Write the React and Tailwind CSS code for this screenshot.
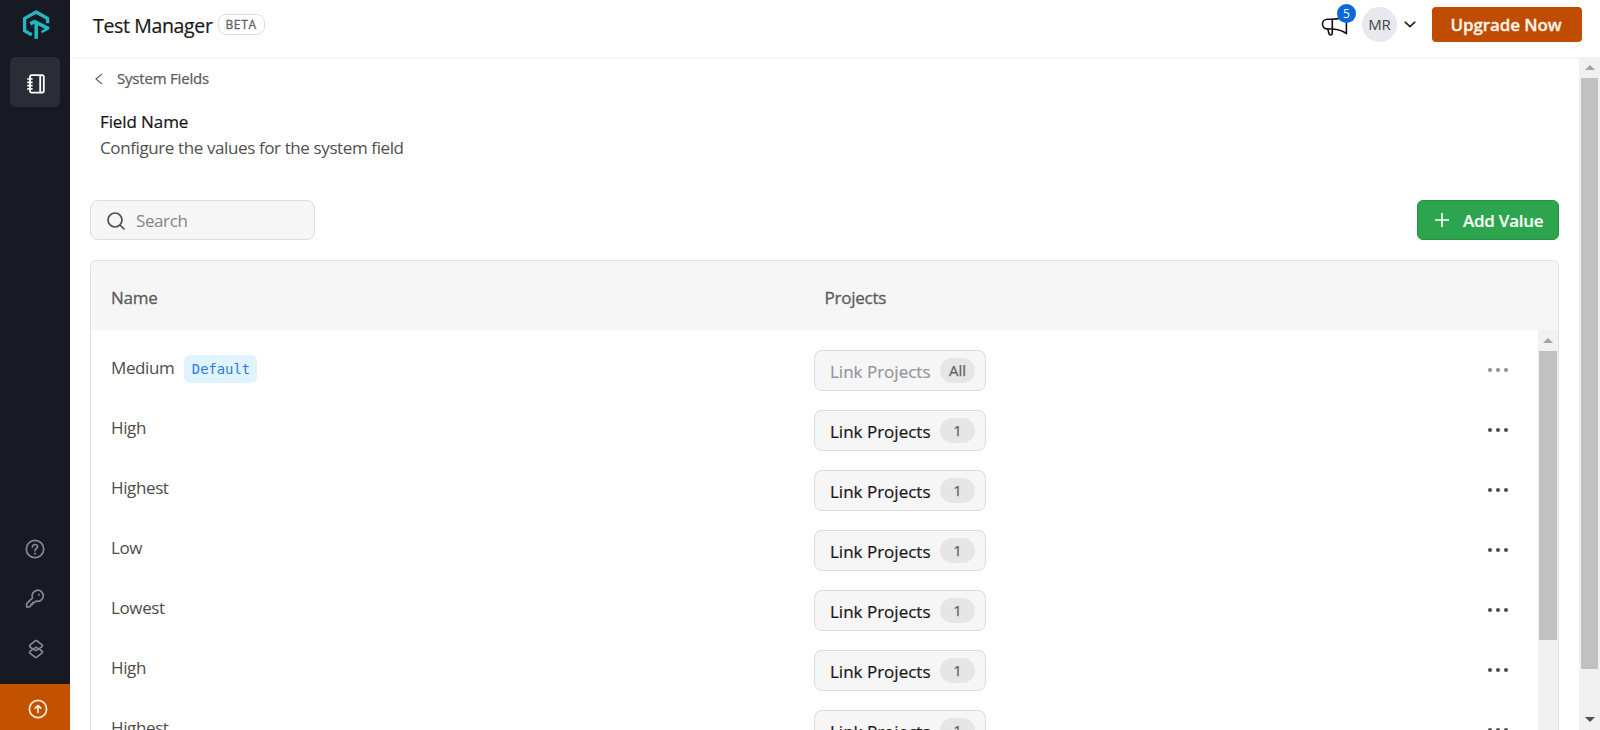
import React from "react";

const values = [
  { name: "Medium", isDefault: true, linked: "All" },
  { name: "High", linked: "1" },
  { name: "Highest", linked: "1" },
  { name: "Low", linked: "1" },
  { name: "Lowest", linked: "1" },
  { name: "High", linked: "1" },
  { name: "Highest", linked: "1" },
];

function Logo() {
  return (
    <svg className="ml-px h-[30px] w-[28px]" viewBox="0 0 28 30" fill="none" stroke="#22b8c2" strokeWidth="3.3" strokeLinejoin="round">
      <path d="M9.8 24.8 L2.6 20.9 V8.4 L14.2 2 L25.6 8.5 V13.2" />
      <path d="M8.2 13.9 L12.6 11.6 L27 18.8" strokeWidth="3.6" />
      <path d="M25.6 18.6 L19.4 22.2" strokeWidth="2.4" />
      <path d="M14.2 12 V28.8" strokeWidth="3.6" />
    </svg>
  );
}

function Notebook() {
  return (
    <svg className="h-5 w-5" viewBox="0 0 20 20" fill="none" stroke="#fff" strokeWidth="1.8">
      <rect x="4" y="1.2" width="13.8" height="17.4" rx="1.8" />
      <path d="M14.2 1.4 V18.4" />
      <path d="M1.2 5 H6.6 M1.2 8.3 H6.6 M1.2 11.6 H6.6 M1.2 14.9 H6.6" strokeWidth="1.7" />
    </svg>
  );
}

function Help() {
  return (
    <svg className="h-5 w-5" viewBox="0 0 20 20" fill="none" stroke="#858a92" strokeWidth="1.7" strokeLinecap="round">
      <circle cx="10" cy="10" r="8.7" />
      <path d="M7.5 8 C7.5 4.6 12.6 4.8 12.5 7.9 C12.4 9.8 10 9.8 10 11.8" />
      <circle cx="10" cy="14.6" r="0.7" fill="#858a92" strokeWidth="0.9" />
    </svg>
  );
}

function Key() {
  return (
    <svg className="h-5 w-5" viewBox="0 0 20 20" fill="none" stroke="#858a92" strokeWidth="1.7" strokeLinejoin="round">
      <path d="M7.5 8.9 A5.6 5.6 0 1 1 10.8 12.1 L9.2 13.7 H7.6 V15.3 H5.9 V16.7 L4.5 17.9 H1.7 V14.7 Z" />
      <circle cx="13.8" cy="5.8" r="1" fill="#858a92" stroke="none" />
    </svg>
  );
}

function Links() {
  return (
    <svg className="ml-[2px] h-5 w-5" viewBox="0 0 20 20" fill="none" stroke="#858a92" strokeWidth="1.7" strokeLinejoin="round" strokeLinecap="round">
      <path d="M7.4 10 L9.4 11.4 Q10 11.8 10.6 11.4 L15.8 7.9 Q17 6.8 15.8 5.6 L10.8 1.8 Q10 1.2 9.2 1.8 L4.2 5.8 Q3 7 4.2 8 L5.8 9.2" />
      <path d="M12.6 10 L10.6 8.6 Q10 8.2 9.4 8.6 L4.2 12.1 Q3 13.2 4.2 14.4 L9.2 18.2 Q10 18.8 10.8 18.2 L15.8 14.2 Q17 13 15.8 12 L14.2 10.8" />
    </svg>
  );
}

function UpCircle() {
  return (
    <svg className="h-5 w-5" viewBox="0 0 20 20" fill="none" stroke="#ffeedd" strokeWidth="1.7" strokeLinecap="round" strokeLinejoin="round">
      <circle cx="10" cy="10" r="8.6" />
      <path d="M10 13.4 V6.8 M7.2 9.2 L10 6.5 L12.8 9.2" />
    </svg>
  );
}

function Megaphone() {
  return (
    <svg className="h-[22px] w-7" viewBox="0 0 28 22" fill="none" stroke="#111" strokeWidth="1.6" strokeLinejoin="round" strokeLinecap="round">
      <path d="M11.5 4.2 H6.4 A4.9 4.9 0 0 0 6.4 14 H11.5 Q20 14.4 25.4 18.6 V1 Q20 4 11.5 4.2 Z" />
      <path d="M11.3 4.2 V18 Q11.2 20 9.6 20 Q8.2 20 7.8 18 L6.8 14" />
    </svg>
  );
}

function Scrollbar({ className, thumb, down }) {
  return (
    <div className={"flex shrink-0 flex-col items-center bg-[#f1f1f1] " + className}>
      <div className="flex h-[21px] w-full shrink-0 items-center justify-center">
        <svg className="h-[5px] w-[10px]" viewBox="0 0 10 5"><path d="M0 5 L5 0 L10 5 Z" fill="#a3a3a3" /></svg>
      </div>
      <div className={"shrink-0 bg-[#c1c1c1] " + thumb} />
      {down && (
        <div className="mt-auto flex h-[21px] w-full shrink-0 items-center justify-center">
          <svg className="h-[5px] w-[10px]" viewBox="0 0 10 5"><path d="M0 0 L5 5 L10 0 Z" fill="#505050" /></svg>
        </div>
      )}
    </div>
  );
}

function Row({ name, isDefault, linked }) {
  return (
    <div className="flex h-[60px] shrink-0 items-start">
      <div className="flex w-[703px] shrink-0 items-start">
        <span className="pt-[6px] text-[17px] leading-6 tracking-[-0.38px] text-[#4d4d4d]">{name}</span>
        {isDefault && (
          <span className="mt-[5px] ml-[10px] flex h-7 w-[73px] items-center justify-center rounded-md bg-[#dff4ff] font-['DejaVu_Sans_Mono','Liberation_Mono',monospace] text-[13.8px] text-[#2f7bdc]">
            Default
          </span>
        )}
      </div>
      <button className="flex h-[41px] w-[172px] shrink-0 items-center rounded-lg border border-[#dadcdf] bg-[#f6f6f6] pl-[15px]">
        <span className={"w-[110px] shrink-0 pt-[2px] text-left text-[17px] leading-6 [-webkit-text-stroke:0.2px_currentColor] " + (isDefault ? "text-[#90969e]" : "text-[#161616]")}>
          Link Projects
        </span>
        <span className="mb-px flex h-[25px] w-[35px] items-center justify-center rounded-full bg-[#e6e6e6] text-[15px] text-[#606060] [-webkit-text-stroke:0.25px_currentColor]">
          {linked}
        </span>
      </button>
      <div className={"mt-[18px] ml-auto flex w-5 items-center justify-between " + (isDefault ? "text-[#919191]" : "text-[#4c4c4c]")}>
        <i className="size-[3.6px] rounded-full bg-current" />
        <i className="size-[3.6px] rounded-full bg-current" />
        <i className="size-[3.6px] rounded-full bg-current" />
      </div>
    </div>
  );
}

export default function App() {
  return (
    <div className="flex h-[730px] w-[1600px] overflow-hidden bg-white font-['Open_Sans','Noto_Sans',sans-serif]">
      <aside className="flex w-[70px] shrink-0 flex-col items-center bg-[#171a22]">
        <div className="flex h-[57px] items-start pt-[10px]"><Logo /></div>
        <div className="flex size-[50px] shrink-0 items-center justify-center rounded-md bg-[#292e36] pt-[3px] pl-[2px]"><Notebook /></div>
        <div className="mt-auto flex flex-col items-center gap-[30px] pb-[25px]">
          <Help />
          <Key />
          <Links />
        </div>
        <div className="flex h-[46px] w-full shrink-0 items-center justify-center bg-[#c25100] pt-1 pl-[5px]"><UpCircle /></div>
      </aside>

      <div className="flex min-w-0 flex-1 flex-col">
        <header className="flex h-[57px] shrink-0 items-start pr-[18px] pl-[23px]">
          <h1 className="pt-[11px] text-[19.5px] leading-[30px] tracking-[-0.34px] text-[#191919] [-webkit-text-stroke:0.2px_currentColor]">Test Manager</h1>
          <span className="mt-[14px] ml-[5px] flex h-[21px] w-[47px] items-center justify-center rounded-[8px] border border-[#dedede] text-[12px] tracking-[0.7px] text-[#606060] [-webkit-text-stroke:0.3px_currentColor]">BETA</span>
          <div className="relative mt-[15px] ml-auto">
            <Megaphone />
            <span className="absolute -top-[11px] left-[16px] flex size-[19px] items-center justify-center rounded-full bg-[#0969da] pt-px text-[12px] text-white">5</span>
          </div>
          <div className="mt-[7px] ml-[13px] flex size-[35px] items-center justify-center rounded-full bg-[#e8e8ef] text-[15px] text-[#444]">MR</div>
          <svg className="mt-[21px] ml-[7px] h-[7px] w-3" viewBox="0 0 12 7" fill="none" stroke="#222" strokeWidth="1.6" strokeLinecap="round" strokeLinejoin="round"><path d="M1.2 1.2 L6 5.6 L10.8 1.2" /></svg>
          <button className="mt-[7px] ml-4 h-[35px] w-[150px] rounded-[4px] bg-[#c04c00] pr-0.5 text-[17px] font-semibold tracking-[-0.1px] text-[#fff4ea] [-webkit-text-stroke:0.3px_currentColor]">Upgrade Now</button>
        </header>

        <div className="flex min-h-0 flex-1">
          <main className="flex min-w-0 flex-1 flex-col border-t-2 border-[#f6f6f7] pr-5 pl-5">
            <div className="flex h-[41px] shrink-0 items-center pl-[5px]">
              <svg className="h-3 w-2 -translate-y-px" viewBox="0 0 8 12" fill="none" stroke="#555" strokeWidth="1.1"><path d="M7 0.8 L1 6 L7 11.2" /></svg>
              <span className="ml-[14px] pb-[2px] text-[15px] tracking-[-0.2px] text-[#5c5c5c] [-webkit-text-stroke:0.25px_currentColor]">System Fields</span>
            </div>
            <div className="h-[100px] shrink-0 pt-[9px] pl-[10px]">
              <h2 className="text-[17px] leading-[26px] tracking-[-0.1px] text-[#161616] [-webkit-text-stroke:0.2px_currentColor]">Field Name</h2>
              <p className="text-[17px] leading-[26px] tracking-[-0.39px] text-[#505050]">Configure the values for the system field</p>
            </div>
            <div className="flex h-10 shrink-0 justify-between">
              <div className="flex w-[225px] items-center rounded-lg border border-[#dedede] bg-[#f6f6f6] pl-4">
                <svg className="mt-[2px] h-[18px] w-[18px]" viewBox="0 0 18 18" fill="none" stroke="#505050" strokeWidth="1.7" strokeLinecap="round"><circle cx="8" cy="8" r="7" /><path d="M13 13 L17 17" /></svg>
                <span className="ml-[11px] pt-[2px] text-[17px] tracking-[-0.4px] text-[#858585]">Search</span>
              </div>
              <button className="flex w-[142px] items-center rounded-md border border-[#25963f] bg-[#2da44e] pl-[17px] text-[17px] font-semibold text-[#f6fff5]">
                <svg className="h-[14px] w-[14px]" viewBox="0 0 14 14" fill="none" stroke="#f6fff5" strokeWidth="1.7"><path d="M7 0 V14 M0 7 H14" /></svg>
                <span className="ml-[14px] pt-[2px] tracking-[-0.25px] [-webkit-text-stroke:0.2px_currentColor]">Add Value</span>
              </button>
            </div>
            <section className="mt-5 flex min-h-0 flex-1 flex-col overflow-hidden rounded-t-md border border-b-0 border-[#e0e0e0]">
              <div className="flex h-[69px] shrink-0 items-center bg-[#f6f6f6] pt-[4px] pl-5 text-[17px] tracking-[-0.25px] text-[#5b5b5b] [-webkit-text-stroke:0.3px_currentColor]">
                <span className="w-[713.5px]">Name</span>
                <span>Projects</span>
              </div>
              <div className="flex min-h-0 flex-1">
                <div className="flex min-w-0 flex-1 flex-col overflow-hidden pt-5 pr-[30px] pl-5">
                  {values.map((value, index) => (
                    <Row key={index} {...value} />
                  ))}
                </div>
                <Scrollbar className="w-5" thumb="h-[289px] w-[18px]" />
              </div>
            </section>
          </main>
          <Scrollbar className="w-[21px]" thumb="h-[591px] w-[17px]" down />
        </div>
      </div>
    </div>
  );
}
